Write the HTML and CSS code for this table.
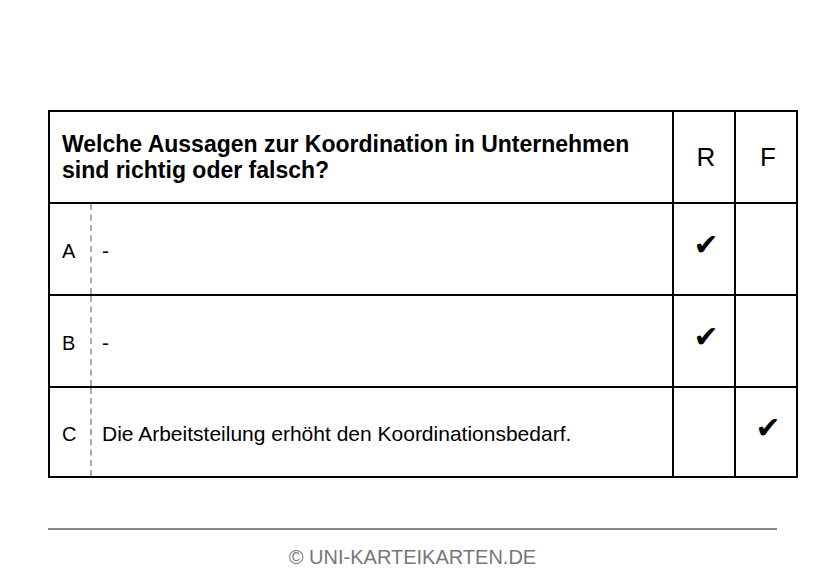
FILE: index.html
```html
<!DOCTYPE html>
<html lang="de">
<head>
<meta charset="utf-8">
<title>Karteikarte</title>
<link rel="stylesheet" href="styles.css">
</head>
<body>
<div class="page">
  <table class="card">
    <colgroup>
      <col class="c-letter">
      <col class="c-text">
      <col class="c-r">
      <col class="c-f">
    </colgroup>
    <tr class="head">
      <td class="question" colspan="2">Welche Aussagen zur Koordination in Unternehmen sind richtig oder falsch?</td>
      <td class="rf">R</td>
      <td class="rf">F</td>
    </tr>
    <tr class="row">
      <td class="letter">A</td>
      <td class="answer">-</td>
      <td class="mark">✔</td>
      <td class="mark"></td>
    </tr>
    <tr class="row">
      <td class="letter">B</td>
      <td class="answer">-</td>
      <td class="mark">✔</td>
      <td class="mark"></td>
    </tr>
    <tr class="row last">
      <td class="letter">C</td>
      <td class="answer">Die Arbeitsteilung erhöht den Koordinationsbedarf.</td>
      <td class="mark"></td>
      <td class="mark">✔</td>
    </tr>
  </table>
  <footer class="footer">
    <div class="rule"></div>
    <div class="copy">© UNI-KARTEIKARTEN.DE</div>
  </footer>
</div>
</body>
</html>
```

FILE: styles.css
```css
html, body {
  margin: 0;
  padding: 0;
  background: #fff;
}
body {
  font-family: "Liberation Sans", Arial, sans-serif;
  color: #000;
}
.page {
  padding: 110px 0 0 48px;
  width: 750px;
}
.card {
  border-collapse: collapse;
  table-layout: fixed;
  width: 750px;
  border: 2px solid #000;
}
.c-letter { width: 42px; }
.c-r { width: 62px; }
.c-f { width: 62px; }
.card td {
  border: 2px solid #000;
  padding: 0;
  vertical-align: middle;
}
.head td {
  height: 90px;
}
.row td {
  height: 82px;
}
.row.last td {
  height: 80px;
}
.card td.question {
  font-weight: bold;
  font-size: 23px;
  line-height: 26px;
  padding: 0 12px;
}
.card td.rf {
  text-align: center;
  font-size: 26px;
  padding: 0 0 0 4px;
}
.card td.letter {
  border-right: 2px dashed #aaa;
  font-size: 20px;
  padding: 6px 0 2px 12px;
}
.card td.answer {
  border-left: 2px dashed #aaa;
  font-size: 21px;
  padding: 6px 0 2px 10px;
}
.card td.mark {
  text-align: center;
  font-family: "DejaVu Sans", sans-serif;
  font-size: 30px;
  line-height: 30px;
  padding: 0 0 8px 4px;
}
.footer {
  width: 729px;
  padding-top: 50px;
}
.rule {
  height: 2px;
  background: #888;
}
.copy {
  text-align: center;
  color: #777;
  font-size: 20px;
  margin-top: 16px;
}
```
